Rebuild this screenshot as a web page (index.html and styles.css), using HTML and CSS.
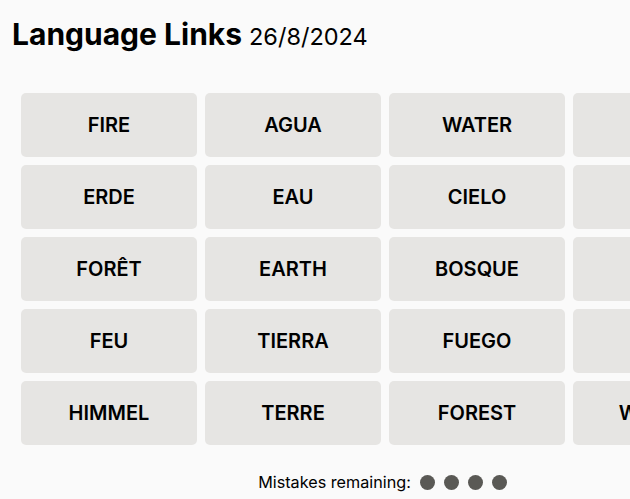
FILE: index.html
```html
<!DOCTYPE html>
<html lang="en">
<head>
  <meta charset="UTF-8" />
  <meta name="viewport" content="width=device-width, initial-scale=1.0"/>
  <title>Language Links</title>
  <link rel="stylesheet" href="styles.css">
</head>
<body>

  <header class="title-bar">
    <h1>Language Links</h1>
    <span class="puzzle-date">26/8/2024</span>
  </header>

  <main class="game">
    <div class="board">
      <button class="tile">FIRE</button>
      <button class="tile">AGUA</button>
      <button class="tile">WATER</button>
      <button class="tile">SKY</button>

      <button class="tile">ERDE</button>
      <button class="tile">EAU</button>
      <button class="tile">CIELO</button>
      <button class="tile">WALD</button>

      <button class="tile">FORÊT</button>
      <button class="tile">EARTH</button>
      <button class="tile">BOSQUE</button>
      <button class="tile">CIEL</button>

      <button class="tile">FEU</button>
      <button class="tile">TIERRA</button>
      <button class="tile">FUEGO</button>
      <button class="tile">FEUER</button>

      <button class="tile">HIMMEL</button>
      <button class="tile">TERRE</button>
      <button class="tile">FOREST</button>
      <button class="tile">WASSER</button>
    </div>

    <div class="mistakes">
      <span class="mistakes-label">Mistakes remaining:</span>
      <span class="dot"></span>
      <span class="dot"></span>
      <span class="dot"></span>
      <span class="dot"></span>
    </div>
  </main>

</body>
</html>
```

FILE: styles.css
```css
body {
  margin: 0;
  font-family: 'Inter', sans-serif;
  background-color: #fafafa;
  color: #000;
  overflow: hidden;
}

.title-bar {
  display: flex;
  align-items: baseline;
  gap: 7px;
  padding: 16px 12px 0;
}

h1 {
  margin: 0;
  font-size: 30px;
  font-weight: 700;
}

.puzzle-date {
  font-size: 23.5px;
  font-weight: 400;
}

.game {
  width: 728px;
  padding: 0 21px;
}

.board {
  display: grid;
  grid-template-columns: repeat(4, 176px);
  grid-auto-rows: 64px;
  gap: 8px;
  margin-top: 41px;
}

.tile {
  background-color: #e6e5e3;
  border: none;
  border-radius: 5px;
  font-family: 'Inter', sans-serif;
  font-size: 20px;
  font-weight: 600;
  color: #000;
  cursor: pointer;
}

.mistakes {
  display: flex;
  justify-content: center;
  align-items: center;
  gap: 9px;
  margin-top: 27px;
  padding-right: 5px;
  font-size: 16.2px;
}

.dot {
  width: 15px;
  height: 15px;
  border-radius: 50%;
  background-color: #5a5955;
}
```
